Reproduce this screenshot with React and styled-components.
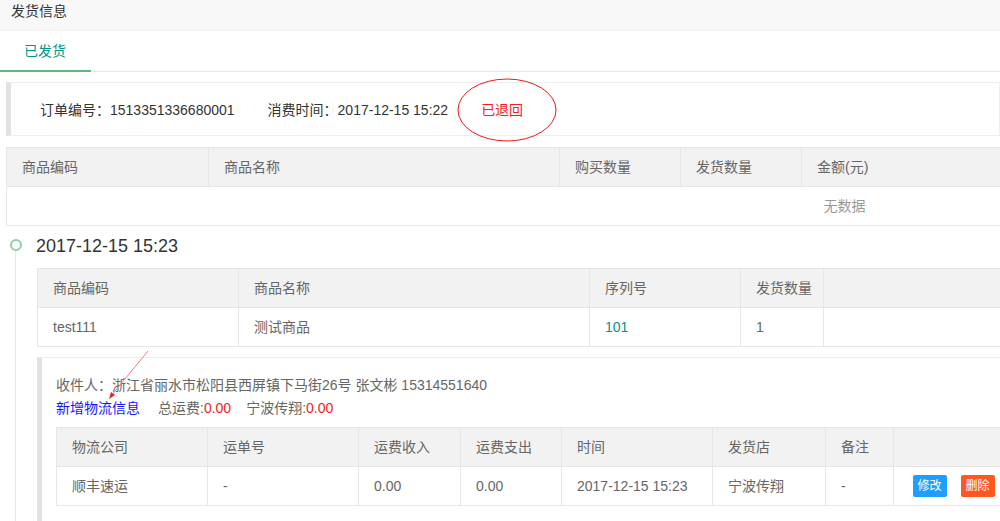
import styled, { createGlobalStyle } from "styled-components";

const GlobalStyle = createGlobalStyle`
    html, body {
        margin: 0;
        overflow: hidden;
        background: #fff;
    }
    body {
        font-family: "Liberation Sans", "Noto Sans CJK SC", sans-serif;
        font-size: 14px;
        color: #666;
    }
`

function DataTable ({ width, widths, head, rows, empty, compact }) {
    return (
        <TableStyle $width={width} $compact={compact}>
            <colgroup>
                {widths.map((w, i) => <col key={i} style={{ width: w }} />)}
            </colgroup>
            <thead>
                <tr>
                    {head.map((h, i) => <th key={i}>{h}</th>)}
                </tr>
            </thead>
            <tbody>
                {rows.length === 0 ? (
                    <tr><EmptyCell colSpan={head.length}>{empty}</EmptyCell></tr>
                ) : rows.map((r, i) => (
                    <tr key={i}>
                        {r.map((c, j) => <td key={j}>{c}</td>)}
                    </tr>
                ))}
            </tbody>
        </TableStyle>
    )
}

function App () {
    return (
        <>
            <GlobalStyle />
            <Page>
                <TopBar>发货信息</TopBar>
                <TabBar>
                    <Tab $active>已发货</Tab>
                </TabBar>

                <OrderBox>
                    <span>订单编号：1513351336680001</span>
                    <span>消费时间：2017-12-15 15:22</span>
                    <Returned>已退回</Returned>
                    <Circle width="100" height="64" viewBox="0 0 100 64">
                        <ellipse cx="50" cy="32" rx="49" ry="31" fill="none" stroke="#f01818" strokeWidth="1" />
                    </Circle>
                </OrderBox>

                <Indent $left={6} $top={11}>
                    <DataTable
                        width={1676}
                        widths={[202, 351, 121, 121, 881]}
                        head={["商品编码", "商品名称", "购买数量", "发货数量", "金额(元)"]}
                        rows={[]}
                        empty="无数据"
                    />
                </Indent>

                <Timeline>
                    <Dot />
                    <Axis />
                    <TimeTitle>2017-12-15 15:23</TimeTitle>
                    <DataTable
                        width={1645}
                        widths={[201, 351, 151, 83, 859]}
                        head={["商品编码", "商品名称", "序列号", "发货数量", ""]}
                        rows={[["test111", "测试商品", <Serial>101</Serial>, "1", ""]]}
                    />

                    <DeliveryBox>
                        <Arrow width="60" height="60" viewBox="0 0 60 60">
                            <line x1="46" y1="2" x2="9" y2="47" stroke="#f47a7a" strokeWidth="1" />
                            <polygon points="7,50 9,43 13,46" fill="#e82020" />
                        </Arrow>
                        <Line>收件人：浙江省丽水市松阳县西屏镇下马街26号 张文彬 15314551640</Line>
                        <Line>
                            <AddLink>新增物流信息</AddLink>
                            <Fee>总运费:<Money>0.00</Money></Fee>
                            <Fee>宁波传翔:<Money>0.00</Money></Fee>
                        </Line>
                        <Indent $left={0} $top={7}>
                            <DataTable
                                compact
                                width={957}
                                widths={[151, 151, 102, 101, 151, 113, 68, 120]}
                                head={["物流公司", "运单号", "运费收入", "运费支出", "时间", "发货店", "备注", ""]}
                                rows={[[
                                    "顺丰速运", "-", "0.00", "0.00", "2017-12-15 15:23", "宁波传翔", "-",
                                    <Actions>
                                        <SmallButton $color="#1E9FFF">修改</SmallButton>
                                        <SmallButton $color="#FF5722">删除</SmallButton>
                                    </Actions>
                                ]]}
                            />
                        </Indent>
                    </DeliveryBox>
                </Timeline>
            </Page>
        </>
    )
}

const Page = styled.div`
    width: 1000px;
    height: 521px;
    overflow: hidden;
    position: relative;
`
const TopBar = styled.div`
    height: 30px;
    line-height: 22px;
    padding-left: 11px;
    color: #333;
    background: #f8f8f8;
    border-bottom: 1px solid #f0f0f0;
`
const TabBar = styled.div`
    display: flex;
    height: 40px;
    border-bottom: 1px solid #e6e6e6;
`
const Tab = styled.div`
    height: 41px;
    box-sizing: border-box;
    margin-bottom: -1px;
    padding: 0 24px 0 24px;
    width: 91px;
    line-height: 40px;
    color: ${p => p.$active ? "#009688" : "#666"};
    border-bottom: 2px solid ${p => p.$active ? "#5FB878" : "transparent"};
`
const OrderBox = styled.div`
    position: relative;
    display: flex;
    gap: 33px;
    margin: 10px 0 0 6px;
    padding: 16px 29px 14px 29px;
    line-height: 22px;
    color: #333;
    border: 1px solid #eee;
    border-left: 5px solid #e2e2e2;
`
const Returned = styled.span`
    color: #f21c1c;
`
const Circle = styled.svg`
    position: absolute;
    left: 446px;
    top: -5px;
`
const Indent = styled.div`
    margin-left: ${p => p.$left}px;
    margin-top: ${p => p.$top}px;
`
const TableStyle = styled.table`
    width: ${p => p.$width}px;
    table-layout: fixed;
    border-collapse: collapse;
    color: #666;

    th, td {
        padding: 9px 15px;
        line-height: 20px;
        border: 1px solid #e6e6e6;
        text-align: left;
        font-weight: normal;
        white-space: nowrap;
    }
    tbody td {
        padding: ${p => p.$compact ? "8px 15px" : "9px 15px"};
    }
    thead tr {
        background: #f2f2f2;
    }
`
const EmptyCell = styled.td`
    && {
        text-align: center;
        color: #999;
    }
`
const Timeline = styled.div`
    position: relative;
    padding-left: 37px;
`
const Dot = styled.div`
    position: absolute;
    left: 10px;
    top: 4px;
    width: 8px;
    height: 8px;
    border: 2px solid #8fd0a6;
    border-radius: 50%;
    background: #fff;
    z-index: 1;
`
const Axis = styled.div`
    position: absolute;
    left: 15px;
    top: 16px;
    bottom: -400px;
    width: 1px;
    background: #e6e6e6;
`
const TimeTitle = styled.div`
    margin: 9px 0 11px -1px;
    font-size: 18px;
    line-height: 22px;
    color: #333;
`
const Serial = styled.span`
    color: #009688;
`
const DeliveryBox = styled.div`
    position: relative;
    margin-top: 10px;
    padding: 16px 15px 15px 14px;
    width: 957px;
    height: 200px;
    border: 1px solid #eee;
    border-left: 5px solid #e2e2e2;
`
const Arrow = styled.svg`
    position: absolute;
    left: 60px;
    top: -9px;
`
const Line = styled.div`
    display: flex;
    line-height: 23px;
    white-space: nowrap;
`
const AddLink = styled.span`
    color: #1414ff;
    margin-right: 18px;
`
const Fee = styled.span`
    margin-right: 15px;
`
const Money = styled.span`
    color: #f21c1c;
`
const Actions = styled.div`
    display: flex;
    justify-content: center;
    gap: 14px;
`
const SmallButton = styled.span`
    display: inline-block;
    width: 34px;
    height: 22px;
    line-height: 22px;
    text-align: center;
    font-size: 12px;
    color: #fff;
    border-radius: 2px;
    background: ${p => p.$color};
`

export default App;
